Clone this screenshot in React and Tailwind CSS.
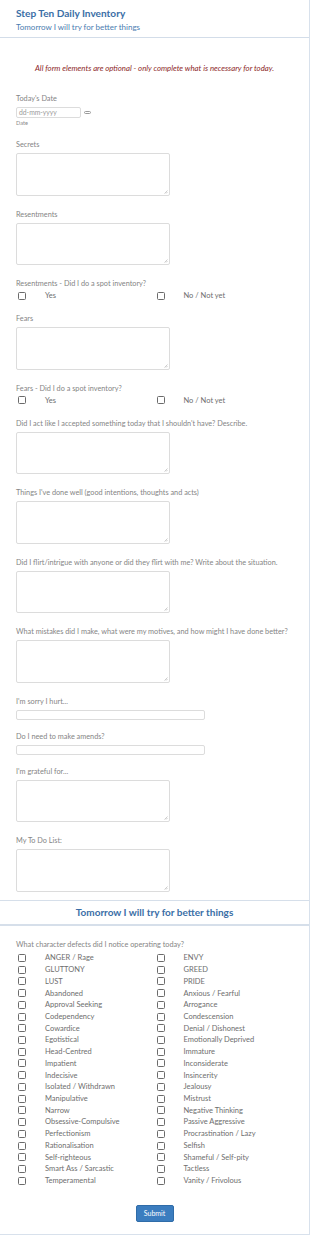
import React from 'react';

const defects = [
  ['ANGER / Rage', 'ENVY'],
  ['GLUTTONY', 'GREED'],
  ['LUST', 'PRIDE'],
  ['Abandoned', 'Anxious / Fearful'],
  ['Approval Seeking', 'Arrogance'],
  ['Codependency', 'Condescension'],
  ['Cowardice', 'Denial / Dishonest'],
  ['Egotistical', 'Emotionally Deprived'],
  ['Head-Centred', 'Immature'],
  ['Impatient', 'Inconsiderate'],
  ['Indecisive', 'Insincerity'],
  ['Isolated / Withdrawn', 'Jealousy'],
  ['Manipulative', 'Mistrust'],
  ['Narrow', 'Negative Thinking'],
  ['Obsessive-Compulsive', 'Passive Aggressive'],
  ['Perfectionism', 'Procrastination / Lazy'],
  ['Rationalisation', 'Selfish'],
  ['Self-righteous', 'Shameful / Self-pity'],
  ['Smart Ass / Sarcastic', 'Tactless'],
  ['Temperamental', 'Vanity / Frivolous'],
];

function Label({ children }) {
  return <div className="h-[9px] leading-[9px] text-[7.3px] text-[#858585] whitespace-nowrap">{children}</div>;
}

function Box() {
  return <span className="inline-block w-[8px] h-[8px] shrink-0 border border-[#6b6b6b] rounded-[1.5px] bg-white" />;
}

function TextField({ label, last }) {
  return (
    <div className={last ? 'mb-[8.7px]' : 'mb-[14px]'}>
      <Label>{label}</Label>
      <div className="relative mt-[4px] w-[154px] h-[42.5px] border border-[#dcdcdc] rounded-[2px] bg-white">
        <svg className="absolute right-[1px] bottom-[1px]" width="4" height="4" viewBox="0 0 4 4">
          <path d="M3.5 0.5 L0.5 3.5 M3.5 2 L2 3.5" stroke="#9a9a9a" strokeWidth="0.5" />
        </svg>
      </div>
    </div>
  );
}

function InputField({ label }) {
  return (
    <div className="mb-[11.5px]">
      <Label>{label}</Label>
      <div className="mt-[4px] w-[189px] h-[10.5px] border border-[#dcdcdc] rounded-[2px] bg-white" />
    </div>
  );
}

function CheckRow({ left, right, className }) {
  return (
    <div className={'grid grid-cols-[138.5px_138.5px] pl-[2px] text-[7.5px] text-[#6e6e6e] ' + className}>
      <div className="flex items-center">
        <Box />
        <span className="ml-[19px] whitespace-nowrap">{left}</span>
      </div>
      <div className="flex items-center">
        <Box />
        <span className="ml-[19px] whitespace-nowrap">{right}</span>
      </div>
    </div>
  );
}

function YesNo({ label }) {
  return (
    <div className="mb-[15px]">
      <Label>{label}</Label>
      <CheckRow left="Yes" right="No / Not yet" className="mt-[2px] h-[9px]" />
    </div>
  );
}

export default function App() {
  return (
    <div className="w-[310px] min-h-[1236px] bg-white" style={{ fontFamily: 'Lato, "Noto Sans", sans-serif' }}>
      <div className="border-r border-b border-[#d8e1ec] pb-[12px]">
        <div className="h-[38px] border-b border-[#d3dde9] px-[16px] pt-[7px]">
          <div className="h-[12px] leading-[12px] text-[10.1px] font-bold text-[#3a6ea6]">Step Ten Daily Inventory</div>
          <div className="mt-[3px] h-[10px] leading-[10px] text-[8px] text-[#4a7cb0]">Tomorrow I will try for better things</div>
        </div>

        <div className="mt-[24.7px] h-[10px] leading-[10px] text-center text-[7.8px] italic text-[#8c1f1f]">
          All form elements are optional - only complete what is necessary for today.
        </div>

        <div className="px-[16px] mt-[21.5px]">
          <Label>Today's Date</Label>
          <div className="mt-[3.5px] flex items-center">
            <div className="w-[64.5px] h-[11.3px] border border-[#dcdcdc] rounded-[2px] pl-[2px] text-[6.8px] leading-[9.5px] text-[#9a9a9a]">dd-mm-yyyy</div>
            <span className="ml-[3px] w-[7px] h-[3px] border border-[#9a9a9a] rounded-full" />
          </div>
          <div className="mt-[2.3px] h-[6px] leading-[6px] text-[5.6px] text-[#8a8a8a]">Date</div>

          <div className="mt-[13.9px]">
            <TextField label="Secrets" />
            <TextField label="Resentments" />
            <YesNo label="Resentments - Did I do a spot inventory?" />
            <TextField label="Fears" />
            <YesNo label="Fears - Did I do a spot inventory?" />
            <TextField label="Did I act like I accepted something today that I shouldn't have? Describe." />
            <TextField label="Things I've done well (good intentions, thoughts and acts)" />
            <TextField label="Did I flirt/intrigue with anyone or did they flirt with me? Write about the situation." />
            <TextField label="What mistakes did I make, what were my motives, and how might I have done better?" />
            <InputField label="I'm sorry I hurt..." />
            <InputField label="Do I need to make amends?" />
            <TextField label="I'm grateful for..." />
            <TextField label="My To Do List:" last />
          </div>
        </div>

        <div className="h-[26px] border-t border-b-2 border-[#d6dfea] flex items-center justify-center text-[10px] font-bold text-[#3a6ea6]">
          Tomorrow I will try for better things
        </div>

        <div className="px-[16px] mt-[14px]">
          <Label>What character defects did I notice operating today?</Label>
          <div className="mt-[2.8px]">
            {defects.map(([l, r]) => (
              <CheckRow key={l} left={l} right={r} className="h-[11.72px]" />
            ))}
          </div>
        </div>

        <div className="mt-[18.5px] flex justify-center">
          <button className="w-[38px] h-[17.3px] bg-[#3b7dbf] rounded-[2px] text-white text-[7px] border border-[#2f6ca8]">
            Submit
          </button>
        </div>
      </div>
    </div>
  );
}
